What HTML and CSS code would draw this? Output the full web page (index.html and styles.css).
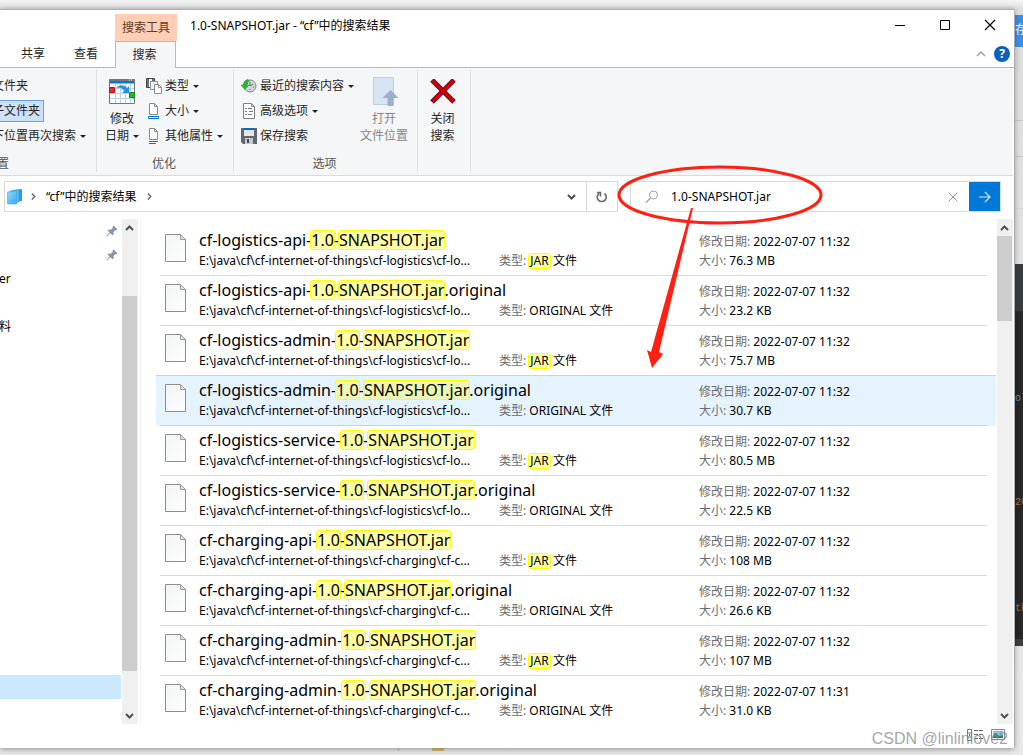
FILE: index.html
```html
<!DOCTYPE html>
<html lang="zh-CN">
<head>
<meta charset="utf-8">
<title>1.0-SNAPSHOT.jar - “cf”中的搜索结果</title>
<link rel="stylesheet" href="styles.css">
</head>
<body>
<svg class="defs" aria-hidden="true">
  <defs>
    <linearGradient id="paper" x1="0" y1="0" x2="1" y2="1"><stop offset="0" stop-color="#f3f5f6"/><stop offset="1" stop-color="#fdfdfd"/></linearGradient>
    <linearGradient id="blue" x1="0" y1="0" x2="1" y2="1"><stop offset="0" stop-color="#8fdcff"/><stop offset="1" stop-color="#38a9f0"/></linearGradient>
    <symbol id="file" viewBox="0 0 22 29"><path d="M.5.5h15l5 5v22H.5z" fill="url(#paper)" stroke="#8c8c8c"/><path d="M15.500.5v5h5z" fill="#e4e4e4" stroke="#999"/></symbol>
    <symbol id="pin" viewBox="0 0 12 12"><path d="M7.500.5l4 4-1 .8-1-.2-2 2 .2 2.200-1.200.9L4.300 8.300 1 11.500l-.6-.5L3.600 7.600 1.600 5.500l.9-1 2.300.2 2-2-.2-1.200z" fill="#8796a5"/></symbol>
    <symbol id="up" viewBox="0 0 9 6"><path d="M1 5l3.500-3.500L8 5" fill="none" stroke="#505050" stroke-width="2"/></symbol>
    <symbol id="down" viewBox="0 0 9 6"><path d="M1 1l3.500 3.500L8 1" fill="none" stroke="#505050" stroke-width="2"/></symbol>
    <symbol id="crumb" viewBox="0 0 5 7"><path d="M.8.5l3 3-3 3" fill="none" stroke="#666" stroke-width="1.400"/></symbol>
  </defs>
</svg>
<div class="desktop">
  <div class="explorer">
    <header class="titlebar">
      <nav class="tabs">
        <button class="tab">共享</button>
        <button class="tab">查看</button>
        <div class="context">
          <span class="context-name">搜索工具</span>
          <button class="tab current">搜索</button>
        </div>
      </nav>
      <h1 class="title">1.0-SNAPSHOT.jar - “cf”中的搜索结果</h1>
      <div class="window-side">
        <div class="window-buttons">
          <button aria-label="最小化"><svg width="12" height="12"><path d="M1 6.500h10" stroke="#000"/></svg></button>
          <button aria-label="最大化"><svg width="12" height="12"><path d="M1.500 1.500h9v9h-9z" fill="none" stroke="#000"/></svg></button>
          <button aria-label="关闭"><svg width="12" height="12"><path d="M1 1l10 10M11 1L1 11" stroke="#000" stroke-width="1.200"/></svg></button>
        </div>
        <div class="help-row">
          <button aria-label="折叠功能区"><svg width="10" height="6"><path d="M1 5l4-4 4 4" fill="none" stroke="#a0a0a0" stroke-width="1.500"/></svg></button>
          <button class="help" aria-label="帮助">?</button>
        </div>
      </div>
    </header>

    <section class="ribbon">
      <div class="group location">
        <div class="stack">
          <button class="cmd">文件夹</button>
          <button class="cmd pressed">子文件夹</button>
          <button class="cmd">下位置再次搜索<i class="caret"></i></button>
        </div>
        <span class="group-name">置</span>
      </div>
      <div class="group refine">
        <div class="group-body">
          <button class="big">
            <svg width="26" height="26"><path d="M.5.5h25v24H.5z" fill="#fff" stroke="#777"/><path d="M6.500 5v19M11.500 5v19M16.500 5v19M21.500 5v19M1 9.500h24M1 14.500h24M1 19.500h24" stroke="#b5d2e4"/><path d="M0 0h26v2H0z" fill="#737b82"/><path d="M20 .5h1v1h-1zM22 .5h1v1h-1z" fill="#fff"/><path d="M1 2h24v2.500H1z" fill="#0078d7"/><path d="M.5 8.500h5v5h-5z" fill="#e12d2d" stroke="#b01c1c"/><path d="M20.500 13.500h5v5h-5z" fill="#18c01e" stroke="#15881b"/><path d="M7 9c4-4 9-3 11 0l2-2v7h-7l2-2c-1-3-4-4-8-3z" fill="#2b92dd"/></svg>
            <span>修改</span><span>日期<i class="caret"></i></span>
          </button>
          <div class="stack">
            <button class="cmd"><svg width="16" height="16"><path d="M.5.500h8v9h-8z" fill="#fff" stroke="#444"/><path d="M2 0v10M7 0v8" stroke="#444" stroke-width="1.500"/><path d="M4 3h3v4H4z" fill="#2384d0"/><path d="M4.500 3.500h7v8h-7z" fill="#eef4f8" stroke="#8a97a3"/><path d="M8.500 6.500h4l3 3v6h-7z" fill="#fff" stroke="#8a8a8a"/><path d="M12.500 6.500v3h3" fill="none" stroke="#8a8a8a"/></svg>类型<i class="caret"></i></button>
            <button class="cmd"><svg width="16" height="16"><path d="M3.500.5h5l3 3v8h-8z" fill="#fff" stroke="#8a8a8a"/><path d="M8.500.5v3h3" fill="none" stroke="#8a8a8a"/><path d="M2.500 13.500h10v2h-10z" fill="#fff" stroke="#0078d7"/></svg>大小<i class="caret"></i></button>
            <button class="cmd"><svg width="16" height="16"><path d="M3.500.5h5l3 3v8h-8z" fill="#fff" stroke="#8a8a8a"/><path d="M8.500.5v3h3" fill="none" stroke="#8a8a8a"/><path d="M3 13.500h9M3 15.500h7" stroke="#0078d7"/></svg>其他属性<i class="caret"></i></button>
          </div>
        </div>
        <span class="group-name">优化</span>
      </div>
      <div class="group options">
        <div class="group-body">
          <div class="stack">
            <button class="cmd"><svg width="16" height="16"><circle cx="9" cy="8" r="6" fill="#d5d8d8" stroke="#7d8585"/><path d="M9 4v4l3-2M5 8h1M12 9h1M9 11v1M6 5l1 1" stroke="#5b6464" fill="none"/><path d="M7 1.500C4 2 2.500 4 2.500 7H0l4 4.500L8 7H5.500C5.500 5 6 4 8 3.500z" fill="#28b52f" stroke="#148c20" stroke-width=".5"/></svg>最近的搜索内容<i class="caret"></i></button>
            <button class="cmd"><svg width="16" height="16"><path d="M2.500.5h8l3 3v12h-11z" fill="#fff" stroke="#7e7e7e"/><path d="M10.500.5v3h3" fill="none" stroke="#8a8a8a"/><path d="M4 5.500h2M7 5.500h4M4 8.500h2M8 8.500h4M4 11.500h2M7 11.500h4" stroke="#777"/></svg>高级选项<i class="caret"></i></button>
            <button class="cmd"><svg width="16" height="16"><path d="M0 0h16v16H2l-2-2z" fill="#5f666d"/><path d="M3 0h10v8H3z" fill="#dfe7ee"/><path d="M3 0h10v2H3z" fill="#0a67b5"/><path d="M4 10h8v6H4z" fill="#c6cacd"/><path d="M6 11h2v4H6z" fill="#454a4f"/></svg>保存搜索</button>
          </div>
          <button class="big" disabled>
            <svg width="30" height="30"><path d="M4.500.5h20v27h-20z" fill="#d7e4f5" stroke="#b9cfe9"/><path d="M21.500 13l8 8h-5v8h-6v-8h-5z" fill="#9dadca"/></svg>
            <span>打开</span><span>文件位置</span>
          </button>
        </div>
        <span class="group-name">选项</span>
      </div>
      <div class="group closing">
        <button class="big">
          <svg width="26" height="26"><path d="M2 1l22 22M24 1L2 23" stroke="#6d0910" stroke-width="5"/><path d="M2.500 1.500l21 21M23.500 1.500l-21 21" stroke="#d1000f" stroke-width="3"/></svg>
          <span>关闭</span><span>搜索</span>
        </button>
      </div>
    </section>

    <div class="address-row">
      <div class="address">
        <svg width="16" height="16"><path d="M6 1l9-1v12l-9 1z" fill="#2e9be6"/><path d="M3 2l9-1v12l-9 1z" fill="#5fbdf3" stroke="#2f9be0" stroke-width=".6"/><path d="M.5 3l9-1v13H.5z" fill="url(#blue)" stroke="#3ea6e8" stroke-width=".6"/></svg>
        <svg class="crumb" width="5" height="7"><use href="#crumb"/></svg>
        <span>“cf”中的搜索结果</span>
        <svg class="crumb" width="5" height="7"><use href="#crumb"/></svg>
        <button class="history" aria-label="历史记录"><svg width="9" height="6"><use href="#down"/></svg></button>
      </div>
      <button class="refresh" aria-label="刷新"><svg width="12" height="12"><path d="M3 2.500A4.500 4.500 0 1 0 8.500 2.500M1 1.500h3.500v4" fill="none" stroke="#6a6a6a" stroke-width="1.600"/></svg></button>
      <form class="search">
        <svg width="14" height="14"><circle cx="8.500" cy="5" r="4" fill="none" stroke="#a19a9a"/><path d="M5.500 8L1 12.500" stroke="#a19a9a" stroke-width="1.300"/></svg>
        <input type="text" value="1.0-SNAPSHOT.jar" aria-label="搜索">
        <button type="button" aria-label="清除"><svg width="10" height="10"><path d="M.5.5l9 9M9.500.5l-9 9" stroke="#9a959d"/></svg></button>
        <button type="button" class="go" aria-label="转到"><svg width="14" height="12"><path d="M1 6h11M7 1l5 5-5 5" fill="none" stroke="#cfe6fa" stroke-width="1.200"/></svg></button>
      </form>
    </div>

    <main class="content">
      <aside class="tree">
        <ul>
          <li class="pinned"><svg width="12" height="12"><use href="#pin"/></svg></li>
          <li class="pinned"><svg width="12" height="12"><use href="#pin"/></svg></li>
          <li>er</li>
          <li></li>
          <li>料</li>
        </ul>
        <div class="tree-selected"></div>
      </aside>
      <div class="scrollbar tree-scroll">
        <svg width="9" height="6"><use href="#up"/></svg><div class="thumb"></div><svg width="9" height="6"><use href="#down"/></svg>
      </div>
      <ul class="results" id="results"></ul>
      <div class="scrollbar list-scroll">
        <svg width="9" height="6"><use href="#up"/></svg><div class="thumb"></div><svg width="9" height="6"><use href="#down"/></svg>
      </div>
    </main>

    <footer class="status">
      <svg width="16" height="12"><path d="M.5.5h4v11h-4zM.5 4h4M.5 8h4" fill="#fff" stroke="#777"/><path d="M2 5h1v2H2z" fill="#d33"/><path d="M7 1.500h4M12 1.500h4M7 5.500h4M12 5.500h4M7 9.500h4M12 9.500h4" stroke="#666"/></svg>
      <svg width="14" height="12"><path d="M.5.5h13v10H.5z" fill="#fff" stroke="#888"/><path d="M2 2h10v7H2z" fill="#86bdf2"/><path d="M2 9V6l3-2 3 3 4-1v3z" fill="#3d8465"/><path d="M2 8h10v1H2z" fill="#2468c8"/></svg>
    </footer>

    <svg class="annotation" width="1014" height="400" aria-hidden="true"><ellipse cx="720" cy="185" rx="101" ry="28" fill="none" stroke="#ff2012" stroke-width="3"/><path d="M691 198L693 198L659 342L663 344L652 358L647 340L651 342z" fill="#ff2012"/></svg>
  </div>

  <div class="behind-right">
    <span class="save">存</span>
    <span class="panes"></span>
    <span class="code"><b class="head"></b><i class="c1">ol</i><i class="c2">20</i><i class="c3">th</i></span>
  </div>
  <div class="behind-bottom"><span class="folder"></span></div>
  <div class="watermark">CSDN @linlinlove2</div>
</div>
<script src="results.js"></script>
</body>
</html>
```
FILE: results.js
```js
const files = [
  ["cf-logistics-api", false, "11:32", "76.3 MB"],
  ["cf-logistics-api", true, "11:32", "23.2 KB"],
  ["cf-logistics-admin", false, "11:32", "75.7 MB"],
  ["cf-logistics-admin", true, "11:32", "30.7 KB"],
  ["cf-logistics-service", false, "11:32", "80.5 MB"],
  ["cf-logistics-service", true, "11:32", "22.5 KB"],
  ["cf-charging-api", false, "11:32", "108 MB"],
  ["cf-charging-api", true, "11:32", "26.6 KB"],
  ["cf-charging-admin", false, "11:32", "107 MB"],
  ["cf-charging-admin", true, "11:31", "31.0 KB"]
];
document.getElementById("results").innerHTML = files.map(([name, original, time, size], i) => {
  const path = name.startsWith("cf-logistics") ? "cf-logistics\\cf-lo..." : "cf-charging\\cf-c...";
  return `<li class="result${i === 3 ? " hovered" : ""}"><div class="cells">
    <svg class="file" width="22" height="29"><use href="#file"/></svg>
    <span class="name">${name}-<mark>1.0</mark>-<mark>SNAPSHOT.jar</mark>${original ? ".original" : ""}</span>
    <span class="date"><em>修改日期:</em> 2022-07-07 ${time}</span>
    <span class="path">E:\\java\\cf\\cf-internet-of-things\\${path}</span>
    <span class="type"><em>类型:</em> ${original ? "ORIGINAL" : "<mark>JAR</mark>"} 文件</span>
    <span class="size"><em>大小:</em> ${size}</span>
  </div></li>`;
}).join("");
```
FILE: styles.css
```css
* { box-sizing: border-box; }
body { margin: 0; font: 12px/16px "Noto Sans", "Noto Sans CJK SC", sans-serif; color: #000; }
button, input { font: inherit; color: inherit; border: 0; padding: 0; background: none; }
ul { list-style: none; margin: 0; padding: 0; }
svg { display: block; flex: none; }
em, i { font-style: normal; }
.defs { position: absolute; width: 0; height: 0; }

.desktop { position: relative; height: 100vh; overflow: hidden; display: grid; grid-template: 9px minmax(0, 1fr) 7px / minmax(0, 1fr) 9px; background: linear-gradient(#f5f5f5, #dedede 9px, #e9e9e9); }
.explorer { position: relative; grid-area: 2 / 1; display: flex; flex-direction: column; background: #fff; border-top: 1px solid #b0b0b0; box-shadow: 0 1px 6px #0006; }

.titlebar { display: flex; height: 58px; border-bottom: 1px solid #f5a873; }
.tabs { display: flex; align-items: flex-end; }
.tab { height: 26px; padding: 0 14px; color: #262626; }
.tab:first-child { margin-left: 7px; }
.tab:nth-child(2) { padding-left: 15px; margin-right: 3px; }
.context { display: flex; flex-direction: column; width: 62px; margin-bottom: -1px; }
.context-name { height: 27px; line-height: 27px; text-align: center; background: #ffceb5; color: #633a27; }
.context .tab { height: 27px; margin: 0 1px 0 0; padding: 0 2px 0 0; background: #f5f6f7; border: 1px solid #f5a873; border-bottom: 0; }
.title { margin: 8px 0 0 13px; font-size: 12px; line-height: 16px; font-weight: 400; }
.window-side { margin-left: auto; }
.window-buttons { display: flex; padding: 9px 12px 0 0; gap: 20px; }
.window-buttons button { width: 25px; height: 12px; display: grid; place-items: center; }
.help-row { display: flex; justify-content: flex-end; align-items: center; gap: 8px; padding: 15px 4px 0 0; }
.help { width: 16px; height: 16px; border-radius: 50%; background: #0b62b8; color: #fff; font-weight: 700; line-height: 16px; }

.ribbon { display: flex; height: 108px; padding-top: 2px; background: #f5f6f7; border-bottom: 1px solid #dadbdc; margin-right: 1px; }
.group { display: flex; flex-direction: column; height: 102px; border-right: 1px solid #dfe0e1; color: #262626; }
.group-body { display: flex; }
.group-name { margin: auto auto 0; padding-right: 2px; color: #555; line-height: 16px; }
.location { width: 97px; overflow: hidden; }
.location .stack { margin-left: -9px; padding-top: 5px; }
.location .group-name { margin-left: -3px; }
.stack { display: flex; flex-direction: column; align-items: flex-start; gap: 3px; padding-top: 5px; }
.cmd { display: flex; align-items: center; gap: 3px; height: 22px; white-space: nowrap; border: 1px solid transparent; }
.cmd.pressed { background: #cce0f7; border-color: #68a4e3; padding-right: 3px; }
.caret { display: inline-block; margin: 0 0 2px 4px; border: 3px solid transparent; border-top-color: #222; border-bottom: 0; }
.cmd .caret { margin: 0 0 0 1px; }
.big { display: flex; flex-direction: column; align-items: center; padding-top: 9px; }
.big span { line-height: 17px; white-space: nowrap; }
.big svg { margin-bottom: 5px; }
.refine { width: 137px; }
.refine .big { width: 34px; margin-left: 8px; }
.refine .stack { margin-left: 6px; }
.options { width: 184px; }
.options .stack { padding-left: 6px; }
.options .big { margin-left: auto; margin-right: 9px; padding-top: 7px; color: #868686; }
.options .big svg { margin-bottom: 3px; }
.closing { width: 53px; padding-right: 3px; }

.address-row { display: grid; grid-template-columns: minmax(0, 583fr) 31px minmax(0, 383fr); height: 31px; margin: 5px 13px 0 4px; }
.address { display: flex; align-items: center; border: 1px solid #d9d9d9; padding-left: 2px; white-space: nowrap; }
.address .crumb { margin: 0 10px 0 8px; }
.address span + .crumb { margin-left: 10px; }
.history { margin-left: auto; width: 29px; display: grid; place-items: center; }
.refresh { display: grid; place-items: center; border: 1px solid #d9d9d9; border-left: 0; }
.search { display: flex; align-items: center; margin-left: 12px; padding-left: 14px; border: 1px solid #d9d9d9; }
.search input { flex: 1; min-width: 0; margin-left: 12px; outline: 0; }
.go { width: 31px; height: 29px; margin-left: 10px; display: grid; place-items: center; background: #0078d7; }
.search > button:not(.go) { padding: 0 1px; }

.content { flex: 1; min-height: 0; display: flex; padding-top: 7px; }
.tree { flex: none; width: 121px; display: flex; flex-direction: column; }
.tree li { height: 24px; line-height: 24px; }
.tree li:not(.pinned) { margin-left: -1px; }
.pinned { display: flex; justify-content: flex-end; align-items: center; padding-right: 3px; }
.tree-selected { height: 24px; margin: auto 0 25px; background: #cce8ff; }
.scrollbar { flex: none; width: 16px; display: flex; flex-direction: column; align-items: flex-start; padding: 6px 0 5px 3px; background: #f0f0f0; }
.thumb { align-self: stretch; margin: 0 1px 0 -3px; background: #cdcdcd; }
.tree-scroll { margin-left: 1px; }
.tree-scroll .thumb { flex: 1; margin-top: 65px; margin-bottom: 42px; }
.list-scroll .thumb { height: 85px; margin-top: 5px; margin-bottom: auto; }
.list-scroll { margin-right: 1px; }
.results { flex: 1; min-width: 0; margin: 0 1px 0 2px; padding: 7px 0 0 15px; border-left: 1px solid #f2f2f2; overflow: hidden; }
.result { padding: 0 9px 0 4px; }
.result.hovered { background: #e5f3ff; box-shadow: 0 -1px #c4d4e2; }
.cells { height: 50px; display: grid; grid-template: 24px 16px / 39px 3fr 2fr 288px; padding-top: 3px; border-bottom: 1px solid #d9d9d9; white-space: nowrap; }
.hovered .cells { border-color: #c4d4e2; }
.file { grid-area: 1 / 1 / 3; margin: 5px 0 0 5px; }
.name { grid-area: 1 / 2 / 2 / 4; font-size: 16px; line-height: 22px; }
.date { grid-area: 1 / 4; line-height: 26px; }
.path { grid-area: 2 / 2; }
.type { grid-area: 2 / 3; }
.size { grid-area: 2 / 4; }
.cells em { color: #6d6d6d; }
mark { display: inline-block; color: inherit; background: #ffffa8; border: 1px solid #ff0; border-radius: 3px; margin: 0 -1px; line-height: 18px; }
.type mark { line-height: 14px; padding: 0 1px; }
.hovered mark { background: #edf6b2; }

.status { height: 24px; display: flex; justify-content: flex-end; gap: 8px; padding: 5px 9px 0 0; }
.annotation { position: absolute; left: 0; top: 0; pointer-events: none; }

.behind-right { grid-area: 2 / 2; display: flex; flex-direction: column; overflow: hidden; padding-top: 6px; border-left: 1px solid #d0d0d0; }
.save { height: 32px; line-height: 30px; background: #3b8ee8; color: #fff; }
.panes { height: 217px; background: linear-gradient(#c8c8c8, #c8c8c8) 0 73px / 100% 1px no-repeat, linear-gradient(#c8c8c8, #c8c8c8) 0 109px / 100% 1px no-repeat, linear-gradient(#d5d5d5, #d5d5d5) 0 161px / 100% 1px no-repeat; }
.code { height: 382px; display: flex; flex-direction: column; background: #282828; border-bottom: 7px solid #3b3f42; font: 10px/16px "Liberation Mono", monospace; }
.head { height: 47px; background: #393c3e; }
.c1 { margin-top: 80px; color: #6897bb; }
.c2 { margin-top: 88px; color: #a8763e; }
.c3 { margin-top: 90px; color: #a86b42; }
.behind-bottom { grid-area: 3 / 1 / 4 / 3; padding-left: 398px; }
.folder { display: block; width: 46px; height: 3px; border-left: 1px solid #c5c5c5; border-right: 12px solid #d9bf6c; }
.watermark { position: absolute; right: 15px; bottom: 5px; font: 16px/22px "Liberation Sans", sans-serif; color: #8e8e8ecc; }
```
